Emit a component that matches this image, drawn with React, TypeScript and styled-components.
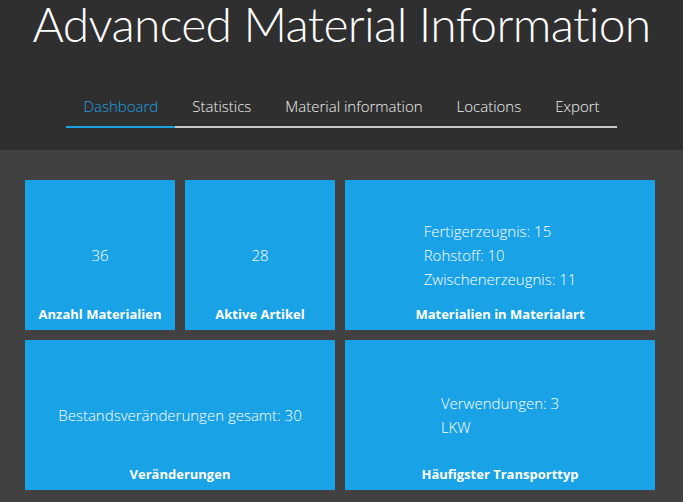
import styled, { createGlobalStyle } from "styled-components";

const GlobalStyle = createGlobalStyle`
    html, body {
        margin: 0;
        padding: 0;
        background: #414141;
        font-family: "Segoe UI", "Open Sans", "Liberation Sans", sans-serif;
        color: #ffffff;
    }
`;

const Header = styled.header`
    background: #2f2f2f;
    height: 150px;
    display: flex;
    flex-direction: column;
    align-items: center;
`;

const Title = styled.h1`
    margin: 0;
    font-family: "Lato", "Open Sans", sans-serif;
    font-weight: 300;
    font-size: 48px;
    line-height: 48px;
    letter-spacing: -0.7px;
    font-variant-ligatures: none;
    white-space: nowrap;
    color: #ffffff;
`;

const Nav = styled.nav`
    display: flex;
    margin-top: 48px;
    border-bottom: 2px solid #c8c8c8;
`;

const Tab = styled.a<{ $active?: boolean }>`
    padding: 0 17px 10px;
    margin-bottom: -2px;
    font-size: 15px;
    font-weight: 300;
    color: ${(p) => (p.$active ? "#1ba1e2" : "#f2f2f2")};
    border-bottom: 2px solid ${(p) => (p.$active ? "#1ba1e2" : "transparent")};
    cursor: pointer;
`;

const Main = styled.main`
    padding: 30px 0 0 25px;
`;

const Grid = styled.div`
    display: grid;
    grid-template-columns: repeat(4, 150px);
    grid-auto-rows: 150px;
    gap: 10px;
`;

const Tile = styled.div<{ $wide?: boolean }>`
    grid-column: span ${(p) => (p.$wide ? 2 : 1)};
    background: #1aa2e6;
    display: grid;
`;

const Value = styled.div`
    grid-area: 1 / 1;
    align-self: center;
    justify-self: center;
    font-size: 15px;
    font-weight: 300;
    line-height: 24px;
`;

const Label = styled.div`
    grid-area: 1 / 1;
    align-self: end;
    justify-self: center;
    padding-bottom: 7px;
    font-size: 13px;
    font-weight: 700;
`;

const tabs = ["Dashboard", "Statistics", "Material information", "Locations", "Export"];

const tiles: { value: string[]; label: string; wide?: boolean }[] = [
    { value: ["36"], label: "Anzahl Materialien" },
    { value: ["28"], label: "Aktive Artikel" },
    {
        value: ["Fertigerzeugnis: 15", "Rohstoff: 10", "Zwischenerzeugnis: 11"],
        label: "Materialien in Materialart",
        wide: true,
    },
    { value: ["Bestandsveränderungen gesamt: 30"], label: "Veränderungen", wide: true },
    { value: ["Verwendungen: 3", "LKW"], label: "Häufigster Transporttyp", wide: true },
];

function App() {
    return (
        <>
            <GlobalStyle />
            <Header>
                <Title>Advanced Material Information</Title>
                <Nav>
                    {tabs.map((t, i) => (
                        <Tab key={t} $active={i === 0}>
                            {t}
                        </Tab>
                    ))}
                </Nav>
            </Header>
            <Main>
                <Grid>
                    {tiles.map((t) => (
                        <Tile key={t.label} $wide={t.wide}>
                            <Value>
                                {t.value.map((v) => (
                                    <div key={v}>{v}</div>
                                ))}
                            </Value>
                            <Label>{t.label}</Label>
                        </Tile>
                    ))}
                </Grid>
            </Main>
        </>
    );
}

export default App;
